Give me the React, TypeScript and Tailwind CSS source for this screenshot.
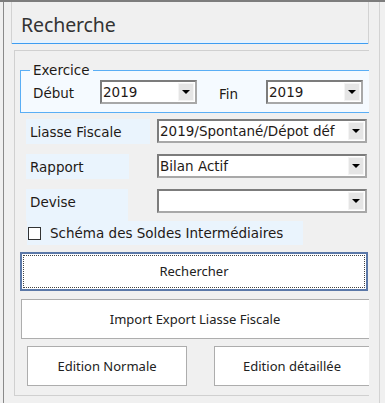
const verdana = "font-['DejaVu_Sans',Verdana,sans-serif] text-[13.5px] text-[#1f1a17]";
const segoe = "font-['Noto_Sans','Open_Sans',sans-serif] text-[13px] text-[#222]";

function Select({ value, className }: { value: string; className: string }) {
  return (
    <div
      className={`flex h-[24px] shrink-0 bg-white border-2 border-t-[#7c7c7c] border-l-[#7c7c7c] border-r-[#a8a8a8] border-b-[#a8a8a8] ${className}`}
    >
      <div className={`flex-1 overflow-hidden whitespace-nowrap pl-[1px] leading-[20px] ${verdana}`}>{value}</div>
      <div className="my-[1px] mr-[1px] w-[16px] flex items-center justify-center bg-[#e5e5e5] border border-[#f4f4f4]">
        <svg width="8" height="4" viewBox="0 0 8 4">
          <path d="M0 0h8L4 4z" fill="#000" />
        </svg>
      </div>
    </div>
  );
}

function Row({ label, labelW, value, h = "h-[25px]", mt }: { label: string; labelW: string; value: string; h?: string; mt: string }) {
  return (
    <div className={`flex items-start ${mt}`}>
      <div className={`ml-[11px] ${labelW} ${h} bg-[#eaf4fd] pl-[4px] pt-[3px] ${verdana}`}>{label}</div>
      <div className="flex-1" />
      <Select value={value} className="w-[210px] mr-[2px]" />
    </div>
  );
}

export default function App() {
  return (
    <div className="w-[385px] h-[403px] bg-[#f0f0f0] border-t-2 border-[#7d7d7d] overflow-hidden flex">
      <div className="ml-[3px] border-l border-[#8a8a8a] flex-1 flex pl-[7px]">
        <div className="w-[358px] flex flex-col">
          {/* header */}
          <div className="h-[42px] border-l border-r border-[#d2d2d2] flex flex-col">
            <div className="flex-1 pl-[9px] pt-[11px] font-['Noto_Sans','Open_Sans',sans-serif] text-[19.5px] leading-[24px] text-[#333] tracking-[-0.1px]">
              Recherche
            </div>
            <div className="h-[3px] bg-[#e8f3fd]" />
            <div className="h-[1px] bg-[#3d9df2]" />
          </div>

          {/* main panel */}
          <div className="mt-[6px] ml-[3px] h-[346px] border border-r-0 border-[#d0d0d0] overflow-hidden flex flex-col">
            <fieldset className="ml-[5px] mt-[11px] w-[360px] shrink-0 border border-[#5aaef5] bg-[#f5faff] pl-[9px] pb-[8px]">
              <legend className={`px-[3px] leading-[16px] ${verdana}`}>Exercice</legend>
              <div className="flex items-center mt-[1px]">
                <span className={`ml-[3px] w-[67px] pt-[3px] ${verdana}`}>Début</span>
                <Select value="2019" className="w-[97px]" />
                <span className={`ml-[22px] w-[47px] pt-[5px] ${verdana}`}>Fin</span>
                <Select value="2019" className="w-[97px]" />
              </div>
            </fieldset>

            <Row label="Liasse Fiscale" labelW="w-[124px]" value="2019/Spontané/Dépot déf" mt="mt-[6px]" />
            <Row label="Rapport" labelW="w-[103px] -ml-[1px]" value="Bilan Actif" mt="mt-[10px]" />
            <Row label="Devise" labelW="w-[102px]" h="h-[32px]" value="" mt="mt-[10px]" />

            <div className="ml-[12px] w-[276px] h-[24px] shrink-0 bg-[#eaf4fd] flex items-center">
              <div className="ml-[1px] w-[13px] h-[13px] bg-white border border-[#333]" />
              <span className={`ml-[9px] ${verdana}`}>Schéma des Soldes Intermédiaires</span>
            </div>

            <div className="ml-[5px] mt-[7px] w-[348px] h-[39px] shrink-0 border-2 border-[#5b78a8] bg-white p-[1px] flex">
              <div className={`flex-1 flex items-center justify-center border border-dotted border-[#444] ${segoe}`}>
                Rechercher
              </div>
            </div>

            <div
              className={`ml-[6px] mt-[8px] w-[360px] h-[40px] shrink-0 bg-white border border-[#adadad] flex items-center justify-center pr-[12px] ${segoe}`}
            >
              Import Export Liasse Fiscale
            </div>

            <div className="flex mt-[7px]">
              <div
                className={`ml-[12px] w-[160px] h-[40px] shrink-0 bg-white border border-[#adadad] flex items-center justify-center ${segoe}`}
              >
                Edition Normale
              </div>
              <div
                className={`ml-[27px] w-[168px] h-[40px] shrink-0 bg-white border border-[#adadad] flex items-center justify-center pr-[12px] ${segoe}`}
              >
                Edition détaillée
              </div>
            </div>
          </div>
        </div>
        <div className="ml-[10px] w-[1px] bg-[#d3d3d3]" />
      </div>
    </div>
  );
}
